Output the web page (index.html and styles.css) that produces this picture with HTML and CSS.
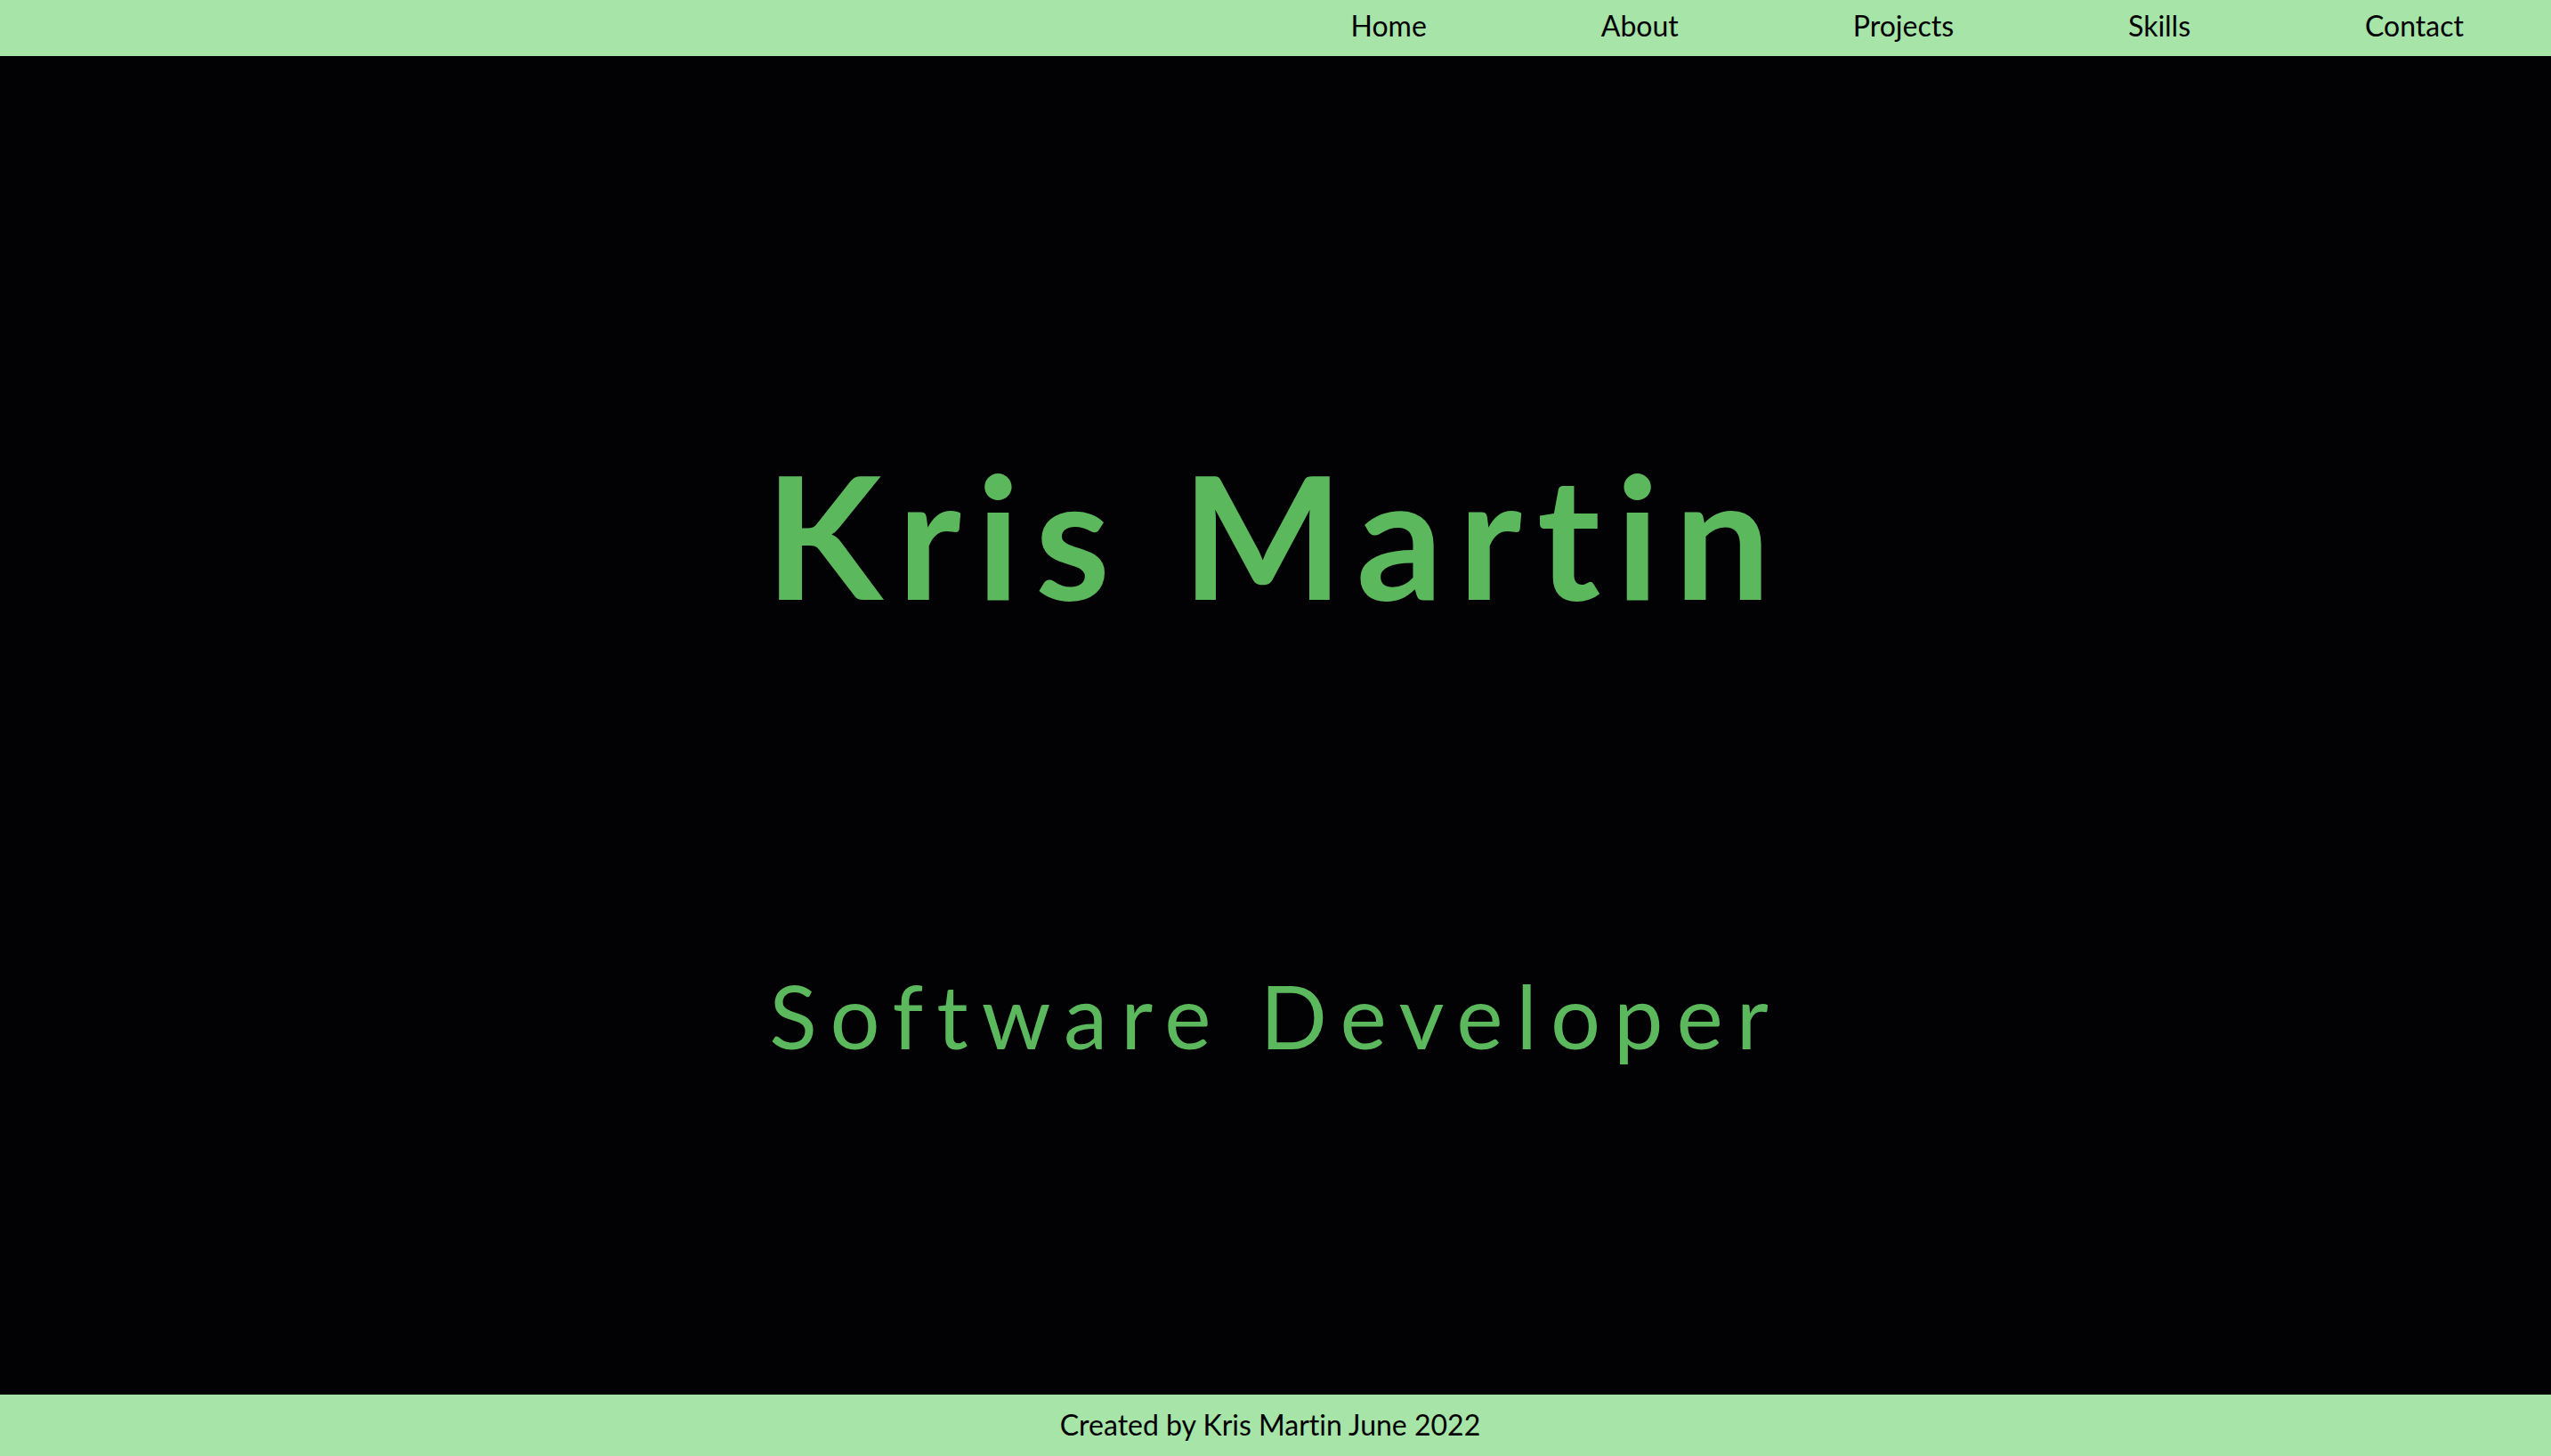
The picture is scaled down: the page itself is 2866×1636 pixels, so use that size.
FILE: index.html
```html
<!DOCTYPE html>
<html lang="en">
<head>
<meta charset="utf-8">
<title>Kris Martin</title>
<link rel="stylesheet" href="styles.css">
</head>
<body>
<header class="topbar">
  <nav class="nav">
    <a class="nav-link" href="#">Home</a>
    <a class="nav-link" href="#">About</a>
    <a class="nav-link" href="#">Projects</a>
    <a class="nav-link" href="#">Skills</a>
    <a class="nav-link" href="#">Contact</a>
  </nav>
</header>
<main class="hero">
  <h1 class="hero-title">Kris Martin</h1>
  <h2 class="hero-subtitle">Software Developer</h2>
</main>
<footer class="footer">
  <p class="footer-text">Created by Kris Martin June 2022</p>
</footer>
</body>
</html>
```

FILE: styles.css
```css
* {
  box-sizing: border-box;
}

html, body {
  margin: 0;
  padding: 0;
}

body {
  min-height: 100vh;
  display: flex;
  flex-direction: column;
  background: #020204;
  font-family: "Trebuchet MS", Lato, "DejaVu Sans", sans-serif;
  font-variant-ligatures: none;
}

.topbar {
  background: #a6e4a8;
  height: 63px;
  padding-top: 13px;
}

.nav {
  display: flex;
  justify-content: flex-end;
}

.nav-link {
  color: #000;
  text-decoration: none;
  font-size: 32px;
  line-height: 1;
  padding: 0 98px;
}

.hero {
  flex: 1;
  display: flex;
  flex-direction: column;
  align-items: center;
  padding-top: 441px;
  gap: 395px;
  color: #5cb85c;
}

.hero-title {
  margin: 0;
  font-size: 192px;
  line-height: 1;
  font-weight: 700;
  letter-spacing: 17px;
}

.hero-subtitle {
  margin: 0;
  font-size: 99px;
  line-height: 1;
  font-weight: 400;
  letter-spacing: 15px;
}

.footer {
  background: #a6e4a8;
  height: 69px;
  padding-top: 18px;
  padding-right: 12px;
}

.footer-text {
  margin: 0;
  text-align: center;
  font-size: 32px;
  line-height: 1;
  color: #000;
}
```
